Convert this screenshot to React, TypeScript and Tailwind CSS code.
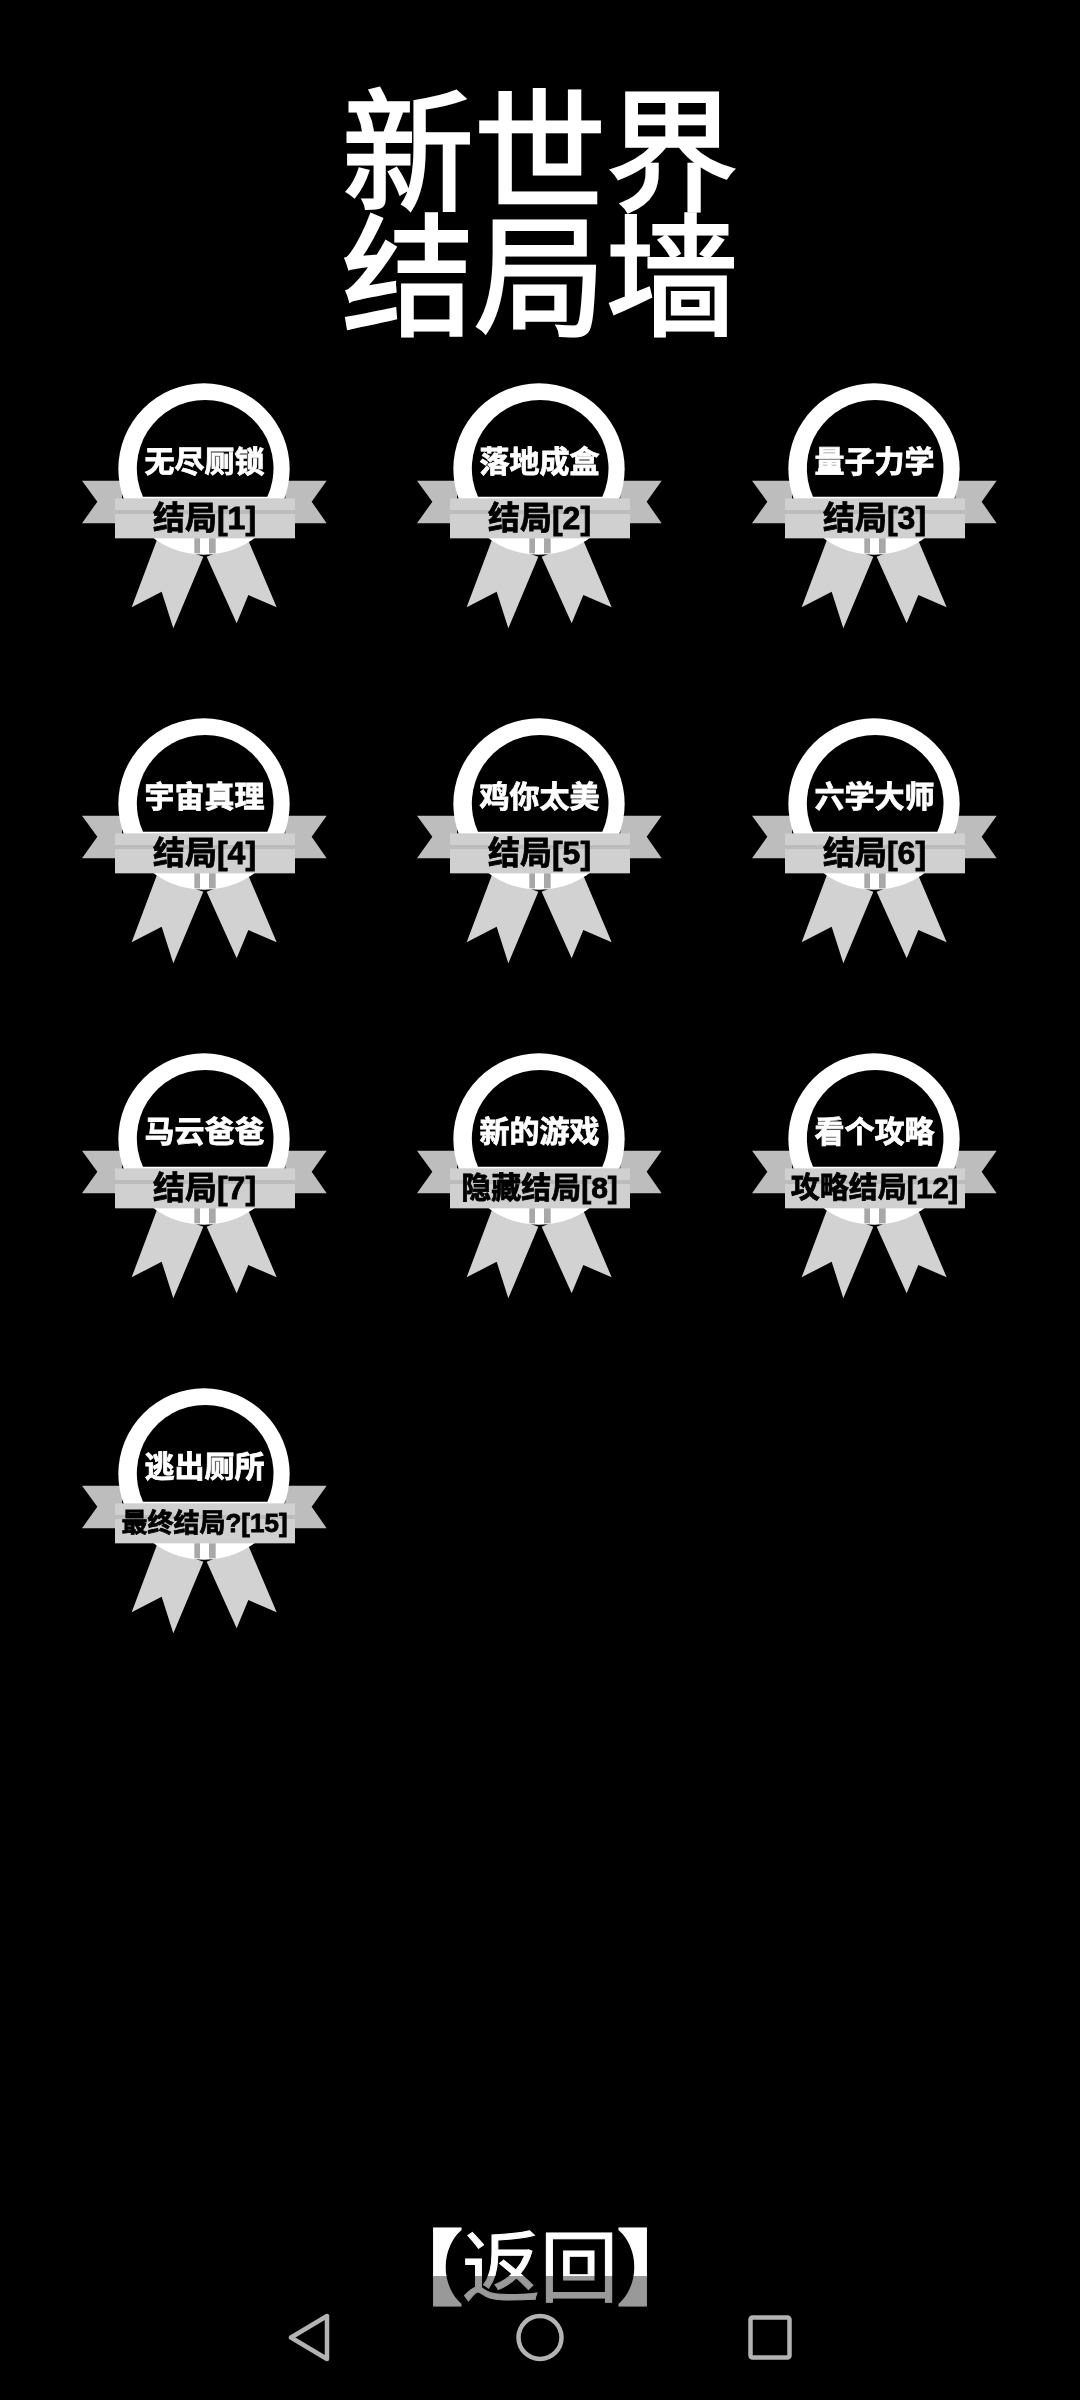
import React from 'react';

interface Ending {
  name: string;
  label: string;
  labelClass: string;
}

const endings: Ending[] = [
  { name: '无尽厕锁', label: '结局[1]', labelClass: 'text-[32px]' },
  { name: '落地成盒', label: '结局[2]', labelClass: 'text-[32px]' },
  { name: '量子力学', label: '结局[3]', labelClass: 'text-[32px]' },
  { name: '宇宙真理', label: '结局[4]', labelClass: 'text-[32px]' },
  { name: '鸡你太美', label: '结局[5]', labelClass: 'text-[32px]' },
  { name: '六学大师', label: '结局[6]', labelClass: 'text-[32px]' },
  { name: '马云爸爸', label: '结局[7]', labelClass: 'text-[32px]' },
  { name: '新的游戏', label: '隐藏结局[8]', labelClass: 'text-[30px]' },
  { name: '看个攻略', label: '攻略结局[12]', labelClass: 'text-[29px]' },
  { name: '逃出厕所', label: '最终结局?[15]', labelClass: 'text-[26px]' },
];

// badge drawing, coordinates are 3x the on-screen size
const BadgeArt = () => (
  <svg viewBox="0 0 735 735" className="absolute inset-0 w-full h-full blur-[0.7px]">
    <path fill="#bdbdbd" d="M0 293H120V421H0L46 356Z" />
    <path fill="#bdbdbd" d="M734 293H610V421H734L689 356Z" />
    <path fill="#d2d2d2" d="M225 470L364 521L274 736L239 626L149 673Z" />
    <path fill="#d2d2d2" d="M498 470L374 521L464 721L499 636L584 673Z" />
    <circle cx="366" cy="258" r="257" fill="#fff" />
    <path fill="#000" d="M183 341A205 205 0 1 1 556 341Z" />
    <rect x="99" y="346" width="540" height="120" fill="#d0d0d0" />
    <rect x="99" y="381" width="540" height="12" fill="#bcbcbc" />
    <rect x="337" y="466" width="17" height="45" fill="#a8a8a8" />
    <rect x="381" y="466" width="20" height="45" fill="#a8a8a8" />
  </svg>
);

const Badge = ({ ending }: { ending: Ending }) => (
  <div className="relative w-[245px] h-[245px]">
    <BadgeArt />
    <div className="absolute top-[57px] left-0 right-0 text-center text-white font-bold text-[30px] leading-[44px] blur-[0.5px] [-webkit-text-stroke:0.8px_white]">
      {ending.name}
    </div>
    <div className={`absolute top-[113px] left-0 right-0 text-center text-black font-bold leading-[44px] blur-[0.5px] [-webkit-text-stroke:0.8px_black] ${ending.labelClass}`}>
      {ending.label}
    </div>
  </div>
);

export default function App() {
  return (
    <div className="relative flex flex-col w-[1080px] h-[2400px] overflow-hidden bg-black font-['Liberation_Sans','Noto_Sans_CJK_SC',sans-serif]">
      {/* Title */}
      <h1 className="mt-[80px] text-center text-white font-normal text-[132px] leading-[125px] font-['Noto_Sans_CJK_SC',sans-serif] [-webkit-text-stroke:3px_white] blur-[0.5px]">
        <div>新世界</div>
        <div>结局墙</div>
      </h1>

      {/* Endings wall */}
      <div className="mt-[53px] pl-[82px] grid grid-cols-[245px_245px_245px] gap-x-[90px] gap-y-[90px]">
        {endings.map((ending) => (
          <Badge key={ending.name} ending={ending} />
        ))}
      </div>

      {/* Back button */}
      <div className="absolute left-0 right-0 top-[2208px] h-[108px] flex justify-center items-center text-white font-['Noto_Sans_CJK_SC',sans-serif] blur-[0.4px]">
        <span className="text-[80px] leading-[108px] font-black [-webkit-text-stroke:3px_white]">【</span>
        <span className="text-[78px] leading-[108px] font-normal [-webkit-text-stroke:1px_white]">返回</span>
        <span className="text-[80px] leading-[108px] font-black [-webkit-text-stroke:3px_white]">】</span>
      </div>

      {/* Android nav bar */}
      <div className="absolute left-0 right-0 bottom-0 h-[124px] bg-black/40 pl-[288px] pt-[37px] flex items-start">
        <svg width="42" height="49" viewBox="0 0 42 49" fill="none" stroke="#b3b3b3" strokeWidth="4.5" strokeLinejoin="round">
          <path d="M39 3V46L3 24.5Z" />
        </svg>
        <svg width="48" height="49" viewBox="0 0 48 49" fill="none" stroke="#b3b3b3" strokeWidth="4.5" className="ml-[186px]">
          <circle cx="24" cy="24.5" r="21.5" />
        </svg>
        <svg width="44" height="45" viewBox="0 0 44 45" fill="none" stroke="#b3b3b3" strokeWidth="4.5" strokeLinejoin="round" className="ml-[184px] mt-[2px]">
          <rect x="2.5" y="2.5" width="39" height="40" rx="2" />
        </svg>
      </div>
    </div>
  );
}
